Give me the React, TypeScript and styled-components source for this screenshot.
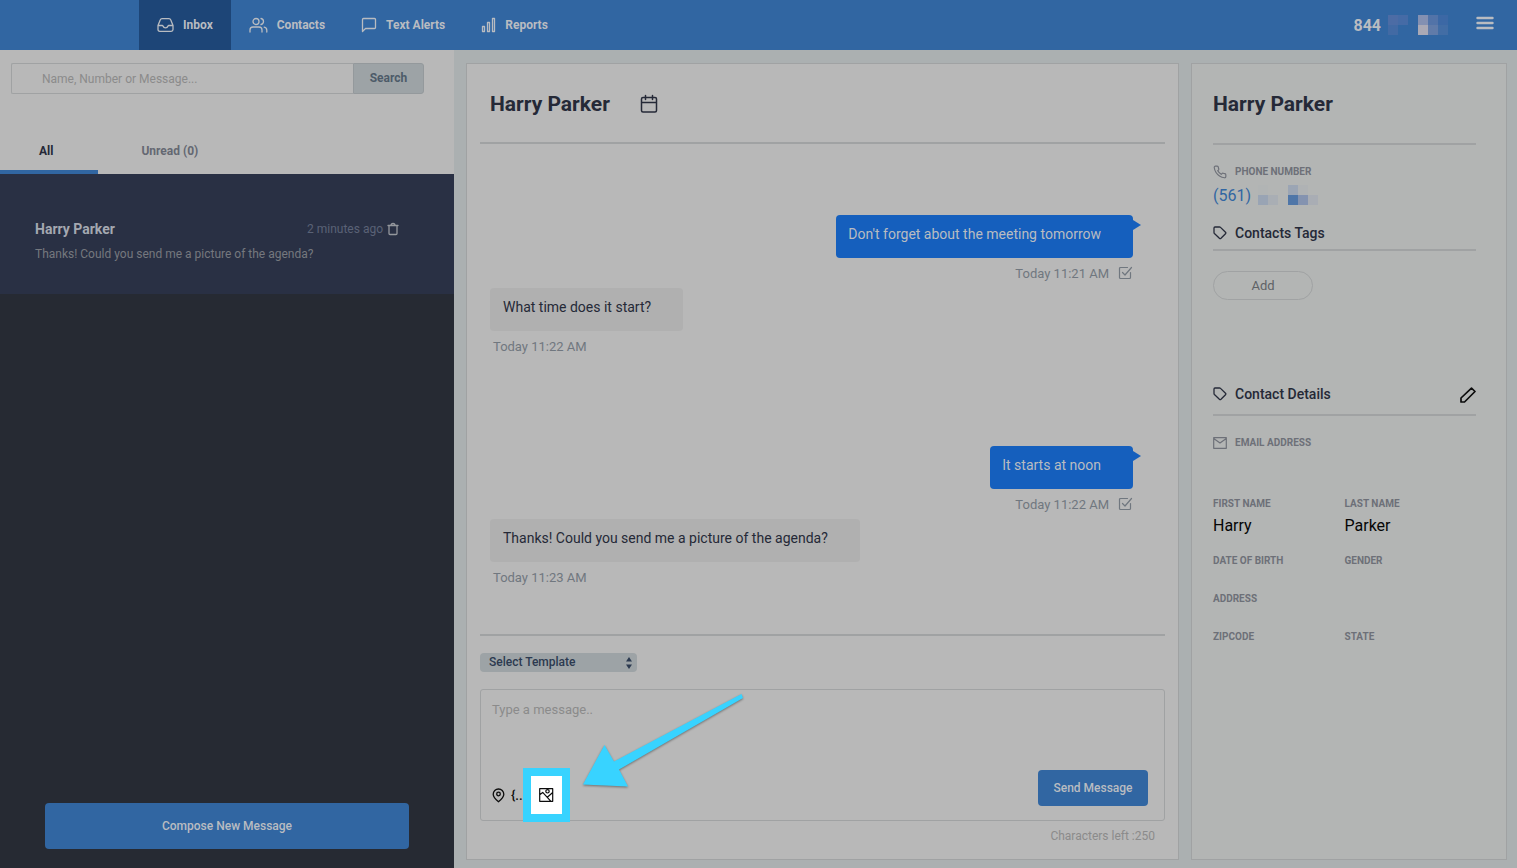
import React from "react";
import styled, { createGlobalStyle } from "styled-components";

const c = {
  blue: "#3166a2",
  navy: "#1d4577",
  panel: "#b8b8b8",
  page: "#abb0b1",
  side: "#b3b5b4",
  line: "#a0a2a3",
  ink: "#252937",
  grey: "#6d7078",
  pale: "#b9bcc1",
};

const Global = createGlobalStyle`
  * { box-sizing: border-box; }
  html, body { margin: 0; }
  body, button, input, select, textarea { font-family: Roboto, "Liberation Sans", sans-serif; }
  button { border: 0; padding: 0; background: none; cursor: pointer; color: inherit; }
  h1, h2, h3, p, dl, dd { margin: 0; }
`;

const Page = styled.div`
  display: flex;
  flex-direction: column;
  min-height: 100vh;
  background: ${c.page};
  color: ${c.ink};
`;

const TopBar = styled.header`
  display: flex;
  justify-content: space-between;
  height: 50px;
  padding: 0 22px 0 139px;
  background: ${c.blue};
  color: ${c.pale};
`;

const Nav = styled.nav`
  display: flex;
`;

const NavLink = styled.a<{ $active?: boolean }>`
  display: flex;
  align-items: center;
  gap: 9px;
  padding: 0 18px;
  font-size: 12px;
  font-weight: 700;
  color: ${c.pale};
  text-decoration: none;
  background: ${(p) => (p.$active ? c.navy : "transparent")};
`;

const Account = styled.div`
  display: flex;
  align-items: center;
  font-size: 16px;
  font-weight: 700;
`;

const MenuButton = styled.button`
  display: flex;
  margin: 0 0 4px 27px;
`;

const Redacted = styled.svg<{ $gap: number }>`
  display: block;
  margin-left: ${(p) => p.$gap}px;
`;

const Body = styled.div`
  display: flex;
  flex: 1;
`;

const Sidebar = styled.aside`
  display: flex;
  flex-direction: column;
  flex: 0 0 454px;
  background: #262a33;
`;

const SidebarTop = styled.div`
  background: ${c.panel};
  padding-top: 13px;
`;

const SearchForm = styled.form`
  display: flex;
  margin: 0 30px 0 11px;
`;

const SearchInput = styled.input`
  flex: 1;
  min-width: 0;
  height: 31px;
  padding: 0 30px;
  border: 1px solid ${c.line};
  border-right: 0;
  border-radius: 2px 0 0 2px;
  background: transparent;
  font-size: 12px;
  &::placeholder { color: #8b8b8b; opacity: 1; }
`;

const SearchButton = styled.button`
  width: 71px;
  height: 31px;
  padding-bottom: 2px;
  border: 1px solid #94999c;
  border-radius: 0 3px 3px 0;
  background: #9da3a6;
  color: #4d5b69;
  font-size: 12px;
  font-weight: 700;
`;

const Tabs = styled.div`
  display: flex;
  gap: 4px;
  margin-top: 33px;
`;

const Tab = styled.button<{ $active?: boolean }>`
  height: 47px;
  padding: 4px 45px 0 39px;
  font-size: 12px;
  font-weight: 700;
  color: ${(p) => (p.$active ? c.ink : "#646872")};
  border-bottom: 4px solid ${(p) => (p.$active ? c.blue : "transparent")};
`;

const Conversation = styled.article`
  height: 120px;
  padding: 46px 55px 0 35px;
  background: #293044;
`;

const ConversationHead = styled.div`
  display: flex;
  align-items: center;
  justify-content: space-between;
  height: 18px;
  color: #a4a8b1;
`;

const ConversationName = styled.h3`
  font-size: 14px;
  font-weight: 700;
`;

const Ago = styled.span`
  display: flex;
  align-items: center;
  gap: 4px;
  font-size: 12px;
  color: #5a6276;
`;

const TrashButton = styled.button`
  display: flex;
  color: #94979d;
`;

const Preview = styled.p`
  margin-top: 8px;
  font-size: 12px;
  line-height: 16px;
  color: #75787e;
`;

const PrimaryButton = styled.button<{ $large?: boolean }>`
  height: ${(p) => (p.$large ? 46 : 36)}px;
  min-width: 110px;
  padding: 0 12px;
  margin: ${(p) => (p.$large ? "auto 45px 19px" : "0")};
  border-radius: 4px;
  background: ${c.blue};
  color: ${c.pale};
  font-size: 12px;
  font-weight: 500;
`;

const Main = styled.main`
  display: flex;
  flex: 1;
  min-width: 0;
  gap: 12px;
  padding: 13px 10px 8px 12px;
`;

const Chat = styled.section`
  display: flex;
  flex-direction: column;
  flex: 1;
  min-width: 0;
  padding: 0 13px;
  border: 1px solid ${c.line};
  background: ${c.panel};
`;

const ChatHead = styled.div`
  display: flex;
  align-items: center;
  gap: 30px;
  height: 80px;
  padding: 2px 0 0 10px;
  border-bottom: 2px solid ${c.line};
`;

const Title = styled.h1`
  font-size: 21px;
  line-height: 24px;
  font-weight: 700;
`;

const IconButton = styled.button`
  display: flex;
  align-items: center;
`;

const Messages = styled.div`
  display: flex;
  flex-direction: column;
  flex: 1;
  padding: 0 32px 0 10px;
  border-bottom: 2px solid ${c.line};
`;

const Message = styled.div<{ $out?: boolean }>`
  display: flex;
  flex-direction: column;
  align-items: ${(p) => (p.$out ? "flex-end" : "flex-start")};
  margin: ${(p) => (p.$out ? "71px 0 0" : "0 0 14px")};
`;

const Bubble = styled.p<{ $out?: boolean }>`
  position: relative;
  height: 43px;
  padding: 10px 32px 0 ${(p) => (p.$out ? 12 : 13)}px;
  border-radius: 4px;
  font-size: 14px;
  line-height: 18px;
  background: ${(p) => (p.$out ? "#155fbd" : "#b0b0b0")};
  color: ${(p) => (p.$out ? c.pale : c.ink)};
  &::after {
    content: "";
    display: ${(p) => (p.$out ? "block" : "none")};
    position: absolute;
    left: 100%;
    top: 5px;
    border: 5px solid transparent;
    border-left: 8px solid #155fbd;
    border-right: 0;
  }
`;

const Stamp = styled.span<{ $out?: boolean }>`
  display: flex;
  align-items: center;
  gap: 9px;
  height: 30px;
  padding-left: ${(p) => (p.$out ? 0 : 3)}px;
  font-size: 13px;
  color: #70777f;
`;

const SelectWrap = styled.label`
  position: relative;
  display: flex;
  align-self: flex-start;
  margin: 17px 0;
`;

const Select = styled.select`
  appearance: none;
  width: 157px;
  height: 19px;
  padding: 0 9px 2px;
  border: 0;
  border-radius: 4px;
  background: #9da3a6;
  color: #2c3a50;
  font-size: 12px;
  font-weight: 500;
`;

const SelectArrows = styled.svg`
  position: absolute;
  right: 5px;
  top: 4px;
  pointer-events: none;
`;

const Composer = styled.div`
  position: relative;
  display: flex;
  flex-direction: column;
  height: 132px;
  border: 1px solid ${c.line};
  border-radius: 3px;
`;

const MessageBox = styled.textarea`
  flex: 1;
  min-height: 0;
  padding: 12px 11px;
  border: 0;
  resize: none;
  background: transparent;
  font-size: 13px;
  line-height: 16px;
  &::placeholder { color: #8b8b8b; opacity: 1; }
`;

const ComposerBar = styled.div`
  display: flex;
  align-items: flex-start;
  justify-content: space-between;
  height: 50px;
  padding: 0 16px 6px 11px;
`;

const Tools = styled.div`
  display: flex;
  align-items: center;
  align-self: flex-end;
  color: #0c0c0c;
`;

const VariableButton = styled.button`
  width: 20px;
  margin-left: 6px;
  text-align: left;
  font-size: 13px;
  font-weight: 500;
`;

const ImageButton = styled.button`
  display: flex;
  align-items: center;
  justify-content: center;
  width: 31px;
  height: 38px;
  background: #fff;
  outline: 8px solid #38d3ff;
`;

const Pointer = styled.svg`
  position: absolute;
  left: 99px;
  top: 0;
  overflow: visible;
  pointer-events: none;
  filter: drop-shadow(0 1px 1px rgba(0, 0, 0, 0.4));
`;

const Counter = styled.p`
  padding: 7px 10px 15px;
  text-align: right;
  font-size: 12px;
  line-height: 16px;
  color: #8b8b8b;
`;

const Details = styled.aside`
  flex: 0 0 316px;
  padding: 0 30px 0 21px;
  border: 1px solid ${c.line};
  background: ${c.side};
`;

const DetailsHead = styled.div`
  display: flex;
  align-items: center;
  height: 81px;
  border-bottom: 2px solid ${c.line};
`;

const Label = styled.div`
  display: flex;
  align-items: center;
  gap: 8px;
  height: 14px;
  font-size: 10px;
  line-height: 14px;
  font-weight: 700;
  text-transform: uppercase;
  color: ${c.grey};
`;

const PhoneBlock = styled.div`
  padding: 20px 0 2px;
`;

const Phone = styled.a`
  display: flex;
  align-items: center;
  height: 32px;
  font-size: 16px;
  color: ${c.blue};
  text-decoration: none;
`;

const SectionHead = styled.div<{ $roomy?: boolean }>`
  display: flex;
  align-items: flex-end;
  justify-content: space-between;
  height: 38px;
  padding-bottom: ${(p) => (p.$roomy ? 11 : 7)}px;
  border-bottom: 2px solid ${c.line};
`;

const SectionTitle = styled.h2`
  display: flex;
  align-items: center;
  gap: 8px;
  font-size: 14px;
  line-height: 18px;
  font-weight: 500;
`;

const TagArea = styled.div`
  height: 127px;
  padding-top: 20px;
`;

const AddButton = styled.button`
  width: 100px;
  height: 29px;
  border: 1px solid #a0a2a3;
  border-radius: 15px;
  font-size: 13px;
  color: #5f6266;
`;

const EmailBlock = styled.div`
  padding: 20px 0 47px;
`;

const Fields = styled.dl`
  display: grid;
  grid-template-columns: 1fr 1fr;
  row-gap: 24px;
`;

const Field = styled.div<{ $wide?: boolean }>`
  grid-column: ${(p) => (p.$wide ? "1 / -1" : "auto")};
`;

const FieldLabel = styled(Label).attrs({ as: "dt" })``;

const Value = styled.dd`
  height: 19px;
  padding-top: 5px;
  font-size: 16px;
  line-height: 19px;
  color: #060606;
`;

type IconProps = { w: number; h?: number; box?: string; sw?: number; children: React.ReactNode };
const Icon = ({ w, h = w, box = "0 0 24 24", sw = 1.3, children }: IconProps) => (
  <svg width={w} height={h} viewBox={box} fill="none" stroke="currentColor" strokeWidth={sw} strokeLinecap="round" strokeLinejoin="round" aria-hidden="true">
    {children}
  </svg>
);

const InboxIcon = () => (
  <Icon w={17} h={16} box="0 0 17 16">
    <path d="M1 8.5 3.300 2.800Q3.700 1.600 5 1.600h7q1.300 0 1.700 1.200L16 8.500V12.500q0 1.800-1.800 1.800H2.800Q1 14.300 1 12.500ZM1 8.500h4.200q.7 0 .9.800.5 1.500 2.400 1.500t2.400-1.500q.2-.8.900-.8H16" />
  </Icon>
);
const PeopleIcon = () => (
  <Icon w={19} h={16} box="0 0 19 16">
    <circle cx="7" cy="4.500" r="3" />
    <path d="M1 15v-2q0-3 3-3h6q3 0 3 3v2M12 1.500q2.500.6 2.500 3t-2.500 3M15.200 10.200q2.600.5 2.600 3V15" />
  </Icon>
);
const ChatIcon = () => (
  <Icon w={16} h={16} box="0 0 16 16">
    <path d="M1.500 14.500v-12q0-1 1-1h11q1 0 1 1v8q0 1-1 1h-9Z" />
  </Icon>
);
const ChartIcon = () => (
  <Icon w={15} h={16} box="0 0 15 16">
    <path d="M1.500 9.500h2v5h-2zM6.500 5.500h2v9h-2zM11.500 1.500h2v13h-2z" />
  </Icon>
);
const TagIcon = () => (
  <Icon w={14} h={14} box="0 0 14 14">
    <path d="M1 2q0-1 1-1h4.500q.6 0 1 .4L12.500 6.300q.7.700 0 1.400L8 12.300q-.8.700-1.600 0L1.400 7.500Q1 7 1 6.500Z" />
  </Icon>
);
const CheckIcon = () => (
  <Icon w={15} h={14} box="0 0 15 14" sw={1.2}>
    <path d="M9.500 1.500h-7q-1 0-1 1v9q0 1 1 1h9q1 0 1-1V6.500M4.500 6.500 7 9l6.500-7.500" />
  </Icon>
);

const PixelBlock = ({ gap, w, cells }: { gap: number; w: number; cells: [number, number, string][] }) => (
  <Redacted $gap={gap} width={w} height="20" aria-hidden="true">
    {cells.map(([x, y, fill]) => (
      <rect key={`${x}-${y}`} x={x} y={y} width="10" height="10" fill={fill} />
    ))}
  </Redacted>
);

const navItems = [
  { label: "Inbox", icon: <InboxIcon />, active: true },
  { label: "Contacts", icon: <PeopleIcon /> },
  { label: "Text Alerts", icon: <ChatIcon /> },
  { label: "Reports", icon: <ChartIcon /> },
];

const messages = [
  { text: "Don't forget about the meeting tomorrow", time: "Today 11:21 AM", out: true },
  { text: "What time does it start?", time: "Today 11:22 AM" },
  { text: "It starts at noon", time: "Today 11:22 AM", out: true },
  { text: "Thanks! Could you send me a picture of the agenda?", time: "Today 11:23 AM" },
];

const fields = [
  { label: "First name", value: "Harry" },
  { label: "Last name", value: "Parker" },
  { label: "Date of birth" },
  { label: "Gender" },
  { label: "Address", wide: true },
  { label: "Zipcode" },
  { label: "State" },
];

export default function App() {
  return (
    <Page>
      <Global />
      <TopBar>
        <Nav>
          {navItems.map((n) => (
            <NavLink key={n.label} href="#" $active={n.active}>
              {n.icon}
              {n.label}
            </NavLink>
          ))}
        </Nav>
        <Account>
          844
          <PixelBlock gap={7} w={20} cells={[[0, 0, "#4c6ca5"], [10, 0, "#456ba6"], [0, 10, "#426aa4"]]} />
          <PixelBlock
            gap={10}
            w={30}
            cells={[[0, 0, "#8390b2"], [10, 0, "#5273a8"], [20, 0, "#3c68a5"], [0, 10, "#aaa9b5"], [10, 10, "#607ba9"], [20, 10, "#426da5"]]}
          />
          <MenuButton aria-label="Menu">
            <Icon w={20} h={14} box="0 0 20 14" sw={2.4}>
              <path d="M2.500 2h15M2.500 7h15M2.500 12h15" />
            </Icon>
          </MenuButton>
        </Account>
      </TopBar>
      <Body>
        <Sidebar>
          <SidebarTop>
            <SearchForm onSubmit={(e) => e.preventDefault()}>
              <SearchInput aria-label="Search conversations" placeholder="Name, Number or Message..." />
              <SearchButton>Search</SearchButton>
            </SearchForm>
            <Tabs>
              <Tab $active>All</Tab>
              <Tab>Unread (0)</Tab>
            </Tabs>
          </SidebarTop>
          <Conversation>
            <ConversationHead>
              <ConversationName>Harry Parker</ConversationName>
              <Ago>
                2 minutes ago
                <TrashButton aria-label="Delete conversation">
                  <Icon w={12} h={14} box="0 0 12 14">
                    <path d="M1 3.500h10M4 3.500q0-2 2-2t2 2M2 3.500v8q0 1 1 1h6q1 0 1-1v-8" />
                  </Icon>
                </TrashButton>
              </Ago>
            </ConversationHead>
            <Preview>Thanks! Could you send me a picture of the agenda?</Preview>
          </Conversation>
          <PrimaryButton $large>Compose New Message</PrimaryButton>
        </Sidebar>
        <Main>
          <Chat>
            <ChatHead>
              <Title>Harry Parker</Title>
              <IconButton aria-label="Schedule">
                <Icon w={18} h={20} box="0 0 18 20" sw={1.5}>
                  <path d="M3 3.500h12q1.500 0 1.500 1.500v11.500q0 1.500-1.500 1.500H3q-1.500 0-1.500-1.500V5Q1.500 3.500 3 3.500ZM1.500 8.500h15M5.500 1.500v4M12.500 1.500v4" />
                </Icon>
              </IconButton>
            </ChatHead>
            <Messages>
              {messages.map((m) => (
                <Message key={m.text} $out={m.out}>
                  <Bubble $out={m.out}>{m.text}</Bubble>
                  <Stamp $out={m.out}>
                    {m.time}
                    {m.out && <CheckIcon />}
                  </Stamp>
                </Message>
              ))}
            </Messages>
            <SelectWrap>
              <Select aria-label="Template">
                <option>Select Template</option>
              </Select>
              <SelectArrows width="6" height="12" viewBox="0 0 6 12" fill="#2c3a50" aria-hidden="true">
                <path d="M3 0 6 4.500H0ZM3 12 0 7.500h6Z" />
              </SelectArrows>
            </SelectWrap>
            <Composer>
              <MessageBox aria-label="Message" placeholder="Type a message.." />
              <ComposerBar>
                <Tools>
                  <IconButton aria-label="Add location">
                    <Icon w={13} h={15} box="0 0 13 15">
                      <path d="M6.500 13.800Q1.200 9.500 1.200 6.300a5.300 5.300 0 0 1 10.600 0Q11.800 9.500 6.500 13.800Z" />
                      <circle cx="6.500" cy="6" r="1.800" />
                    </Icon>
                  </IconButton>
                  <VariableButton aria-label="Insert variable">{"{.."}</VariableButton>
                  <ImageButton aria-label="Attach image">
                    <Icon w={15} h={14} box="0 0 15 14" sw={1.2}>
                      <path d="M.7.700h13v12.600H.7ZM.7 6.700 3.700 4.400 11.500 12.800M8.300 9.200l5.400-4.700" />
                      <circle cx="8.500" cy="3.300" r="1.700" />
                    </Icon>
                  </ImageButton>
                </Tools>
                <PrimaryButton>Send Message</PrimaryButton>
              </ComposerBar>
              <Pointer width="166" height="100" viewBox="0 0 166 100" aria-hidden="true">
                <path d="M161.500 4 163 8 39 79.500 48 96.500 3 94.500 24.500 55 34 71.500Z" fill="#38d3ff" />
              </Pointer>
            </Composer>
            <Counter>Characters left :250</Counter>
          </Chat>
          <Details>
            <DetailsHead>
              <Title>Harry Parker</Title>
            </DetailsHead>
            <PhoneBlock>
              <Label>
                <Icon w={14} sw={2}>
                  <path d="M22 16.920v3a2 2 0 0 1-2.180 2 19.800 19.800 0 0 1-8.630-3.070 19.500 19.500 0 0 1-6-6 19.800 19.800 0 0 1-3.070-8.670A2 2 0 0 1 4.110 2h3a2 2 0 0 1 2 1.720c.127.960.362 1.903.700 2.810a2 2 0 0 1-.450 2.110L8.090 9.910a16 16 0 0 0 6 6l1.270-1.270a2 2 0 0 1 2.110-.450c.907.338 1.850.573 2.810.700A2 2 0 0 1 22 16.920z" />
                </Icon>
                Phone number
              </Label>
              <Phone href="#">
                (561)
                <PixelBlock gap={7} w={20} cells={[[0, 0, "#b1b4b4"], [0, 10, "#99a4b4"], [10, 10, "#a9aeb4"]]} />
                <PixelBlock
                  gap={10}
                  w={30}
                  cells={[[0, 0, "#9ba5b4"], [10, 0, "#afb2b4"], [0, 10, "#4f76a8"], [10, 10, "#8493b0"], [20, 10, "#a9adb4"]]}
                />
              </Phone>
            </PhoneBlock>
            <SectionHead>
              <SectionTitle>
                <TagIcon />
                Contacts Tags
              </SectionTitle>
            </SectionHead>
            <TagArea>
              <AddButton>Add</AddButton>
            </TagArea>
            <SectionHead $roomy>
              <SectionTitle>
                <TagIcon />
                Contact Details
              </SectionTitle>
              <IconButton aria-label="Edit contact">
                <Icon w={16} h={16} box="0 0 16 16" sw={1.7}>
                  <path d="M1 15v-4L11.500 1.200 15 4.500 4.500 15Z" stroke="#0c0c0c" />
                </Icon>
              </IconButton>
            </SectionHead>
            <EmailBlock>
              <Label>
                <Icon w={14} h={12} box="0 0 14 12" sw={1.2}>
                  <path d="M.7.700h12.600v10.600H.7ZM.7 1.500 7 6l6.300-4.500" />
                </Icon>
                Email address
              </Label>
            </EmailBlock>
            <Fields>
              {fields.map((f) => (
                <Field key={f.label} $wide={f.wide}>
                  <FieldLabel>{f.label}</FieldLabel>
                  {f.value && <Value>{f.value}</Value>}
                </Field>
              ))}
            </Fields>
          </Details>
        </Main>
      </Body>
    </Page>
  );
}
